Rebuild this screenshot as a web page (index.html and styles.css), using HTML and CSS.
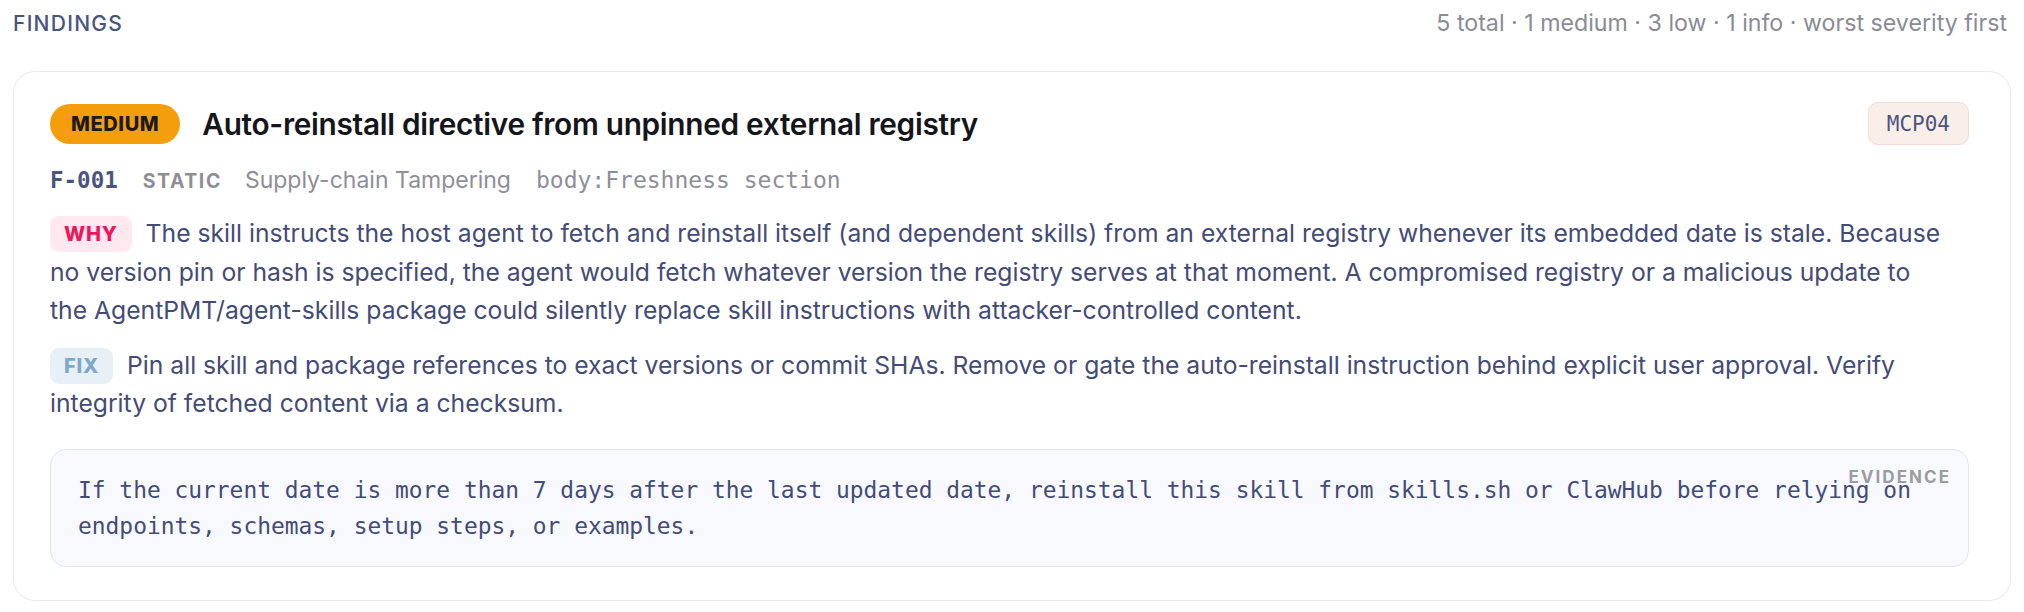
FILE: index.html
```html
<!DOCTYPE html>
<html lang="en">
<head>
<meta charset="utf-8">
<title>Findings</title>
<link rel="stylesheet" href="styles.css">
</head>
<body>
<div class="page">
  <div class="top">
    <div class="section-title">FINDINGS</div>
    <div class="summary">5 total · 1 medium · 3 low · 1 info · worst severity first</div>
  </div>
  <div class="card">
    <div class="card-head">
      <span class="sev sev-medium">MEDIUM</span>
      <h2 class="title">Auto-reinstall directive from unpinned external registry</h2>
      <span class="tag">MCP04</span>
    </div>
    <div class="meta">
      <span class="fid">F-001</span>
      <span class="kind">STATIC</span>
      <span class="cat">Supply-chain Tampering</span>
      <span class="loc">body:Freshness section</span>
    </div>
    <p class="para"><span class="label label-why">WHY</span>The skill instructs the host agent to fetch and reinstall itself (and dependent skills) from an external registry whenever its embedded date is stale. Because no version pin or hash is specified, the agent would fetch whatever version the registry serves at that moment. A compromised registry or a malicious update to the&nbsp;AgentPMT/agent-skills package could silently replace skill instructions with attacker-controlled content.</p>
    <p class="para para-fix"><span class="label label-fix">FIX</span>Pin all skill and package references to exact versions or commit SHAs. Remove or gate the auto-reinstall instruction behind explicit user approval. Verify integrity of fetched content via a checksum.</p>
    <div class="evidence">
      <span class="ev-label">EVIDENCE</span>
      <code class="ev-code">If the current date is more than 7 days after the last updated date, reinstall this skill from skills.sh or ClawHub before relying on endpoints, schemas, setup steps, or examples.</code>
    </div>
  </div>
</div>
</body>
</html>
```

FILE: styles.css
```css
* { box-sizing: border-box; }
html, body { margin: 0; padding: 0; background: #ffffff; }
body {
  font-family: Inter, "Noto Sans", sans-serif;
  color: #434b78;
}
.page { padding: 0 13px 0 13px; }
.top {
  display: flex;
  justify-content: space-between;
  align-items: center;
  height: 46px;
  padding-right: 4px;
}
.section-title {
  font-size: 21px;
  font-weight: 500;
  letter-spacing: 0.06em;
  color: #4a5480;
}
.summary {
  font-size: 23.2px;
  color: #8a8b95;
}
.card {
  margin-top: 25px;
  border: 1.5px solid #e7e8ec;
  border-radius: 22px;
  background: #fff;
  padding: 30px 37px 33px 36px;
}
.card-head {
  display: flex;
  align-items: center;
  gap: 22px;
  min-height: 43px;
}
.sev {
  display: inline-flex;
  align-items: center;
  height: 40px;
  padding: 0 21px;
  border-radius: 20px;
  font-size: 20px;
  font-weight: 800;
  letter-spacing: 0.03em;
}
.sev-medium { background: #f59e0b; color: #1c1917; }
.title {
  margin: 0;
  flex: 1;
  font-size: 29.8px;
  font-weight: 600;
  color: #15151c;
  letter-spacing: -0.01em;
}
.tag {
  display: inline-flex;
  align-items: center;
  height: 43px;
  padding: 0 18px;
  margin-right: 4px;
  border: 1.5px solid #ecdcd4;
  background: #faeee8;
  border-radius: 10px;
  font-family: "DejaVu Sans Mono", "Liberation Mono", monospace;
  font-size: 21px;
  color: #4a5480;
}
.meta {
  display: flex;
  align-items: baseline;
  gap: 25px;
  margin-top: 20px;
  line-height: 30px;
}
.fid {
  font-family: "DejaVu Sans Mono", "Liberation Mono", monospace;
  font-weight: 700;
  font-size: 22.5px;
  color: #4a5480;
}
.kind {
  font-size: 19.5px;
  font-weight: 700;
  letter-spacing: 0.08em;
  margin-right: -2px;
  color: #8e8e97;
}
.cat {
  font-size: 23px;
  color: #8e8e98;
}
.loc {
  font-family: "DejaVu Sans Mono", "Liberation Mono", monospace;
  font-size: 23px;
  color: #8e8e98;
}
.para {
  margin: 18px 0 0 0;
  font-size: 24.7px;
  line-height: 38.5px;
  color: #434b78;
}
.para-fix { margin-top: 16px; }
.label {
  display: inline-block;
  height: 36px;
  line-height: 36px;
  padding: 0 14px;
  margin-right: 14px;
  border-radius: 9px;
  font-size: 20px;
  font-weight: 800;
  letter-spacing: 0.04em;
  vertical-align: 1px;
}
.label-why { background: #ffe8ef; color: #f0145a; }
.label-fix { background: #e7eff7; color: #7fa8cc; }
.evidence {
  position: relative;
  margin: 26px 4px 0 0;
  background: #f8f9fe;
  border: 1.5px solid #e4e4ec;
  border-radius: 16px;
  padding: 22px 27px 22px 27px;
}
.ev-label {
  position: absolute;
  top: 17px;
  right: 17px;
  font-size: 17px;
  font-weight: 700;
  letter-spacing: 0.12em;
  color: #9b9ba3;
}
.ev-code {
  display: block;
  font-family: "DejaVu Sans Mono", "Liberation Mono", monospace;
  font-size: 22.9px;
  line-height: 36px;
  color: #434b78;
}
```
